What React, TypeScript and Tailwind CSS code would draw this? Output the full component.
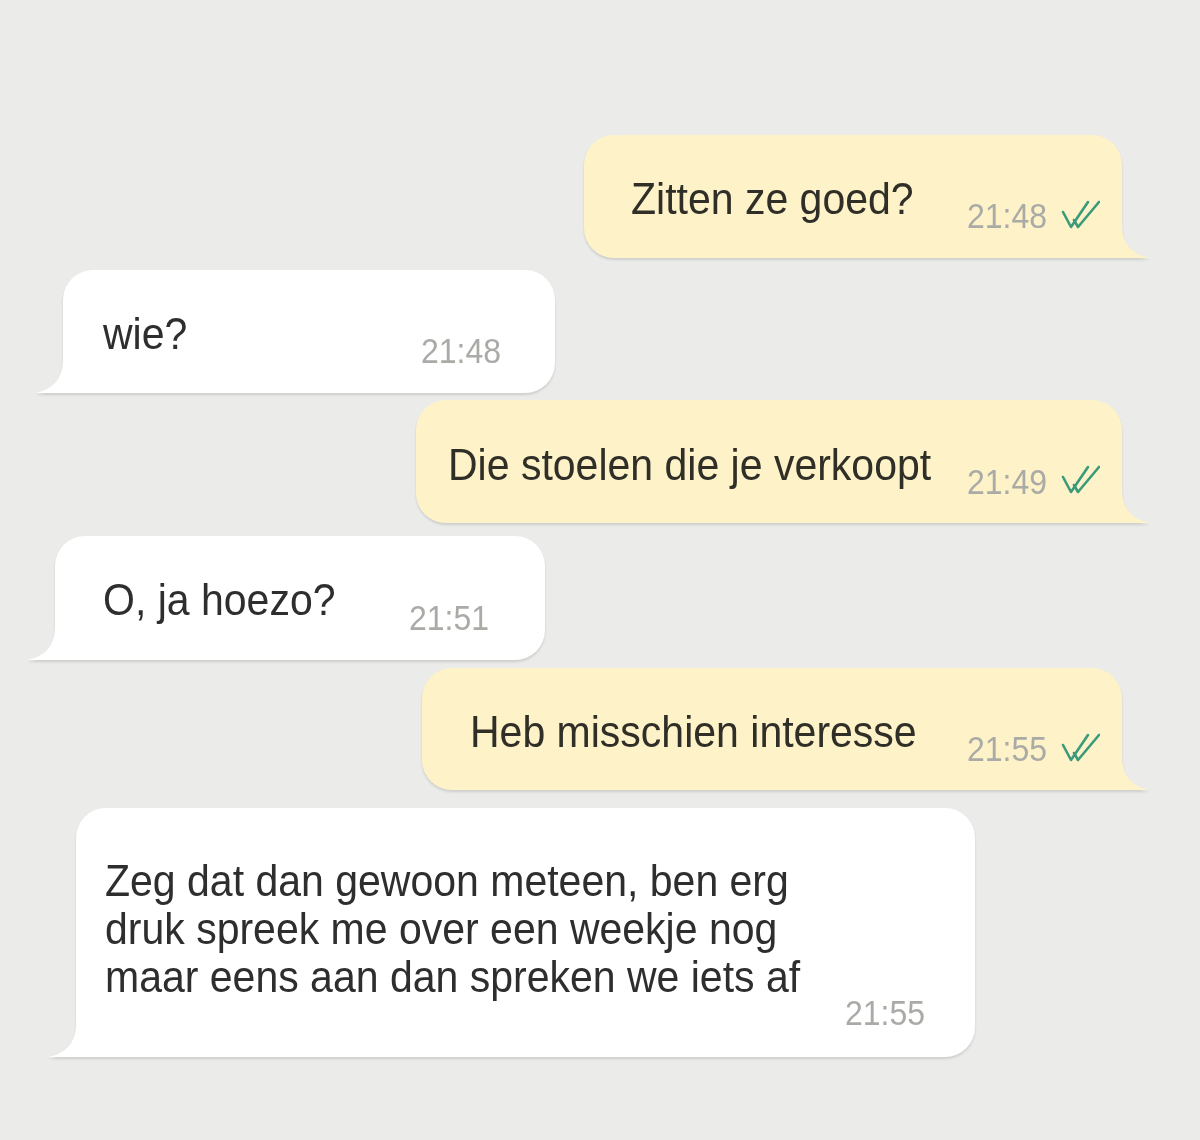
import React from "react";

const FONT = { fontFamily: '"Liberation Sans", Arial, sans-serif' };

function Checks() {
  return (
    <svg width="40" height="30" viewBox="0 0 40 30" fill="none" className="shrink-0 mt-[65px]">
      <path d="M3 12 L11 27 L28 2" stroke="#3b9a7a" strokeWidth="2.6" strokeLinecap="round" strokeLinejoin="round" />
      <path d="M14 20 L18 27 L39 2" stroke="#3b9a7a" strokeWidth="2.6" strokeLinecap="round" strokeLinejoin="round" />
    </svg>
  );
}

function Time({ t }: { t: string }) {
  return (
    <div className="shrink-0 text-[32px] leading-[36px] text-[#aaaaa6] scale-y-[1.1]">{t}</div>
  );
}

function SentTail() {
  return (
    <svg className="absolute bottom-0 left-[calc(100%-1px)]" width="30" height="34" viewBox="0 0 30 34">
      <path d="M0 0 L1 0 C1 18 9 30 29 34 L0 34 Z" fill="#fdf2c8" />
    </svg>
  );
}

function RecvTail() {
  return (
    <svg className="absolute bottom-0 right-[calc(100%-1px)]" width="30" height="34" viewBox="0 0 30 34">
      <path d="M30 0 L29 0 C29 18 21 30 1 34 L30 34 Z" fill="#ffffff" />
    </svg>
  );
}

export default function App() {
  return (
    <div className="w-[1200px] h-[1140px] bg-[#ebebe9] pt-[135px] overflow-hidden" style={FONT}>
      {/* B1 sent */}
      <div className="flex justify-end pr-[78px]">
        <div className="relative drop-shadow-[0_2px_1px_rgba(0,0,0,0.12)]">
          <div className="w-[538px] h-[123px] bg-[#fdf2c8] rounded-[30px] rounded-br-none flex items-start pl-[47px] pr-[22px]">
            <div className="pt-[38px] text-[41px] leading-[48px] text-[#2f2e27] scale-y-[1.1]">Zitten ze goed?</div>
            <div className="flex-1" />
            <div className="mt-[63px]"><Time t="21:48" /></div>
            <div className="w-[13px]" />
            <Checks />
          </div>
          <SentTail />
        </div>
      </div>

      {/* B2 received */}
      <div className="flex mt-[12px] pl-[63px]">
        <div className="relative drop-shadow-[0_2px_1px_rgba(0,0,0,0.12)]">
          <div className="w-[492px] h-[123px] bg-white rounded-[30px] rounded-bl-none flex items-start pl-[40px] pr-[54px]">
            <div className="pt-[38px] text-[41px] leading-[48px] text-[#2e2e2e] scale-y-[1.1]">wie?</div>
            <div className="flex-1" />
            <div className="mt-[63px]"><Time t="21:48" /></div>
          </div>
          <RecvTail />
        </div>
      </div>

      {/* B3 sent */}
      <div className="flex justify-end pr-[78px] mt-[7px]">
        <div className="relative drop-shadow-[0_2px_1px_rgba(0,0,0,0.12)]">
          <div className="w-[706px] h-[123px] bg-[#fdf2c8] rounded-[30px] rounded-br-none flex items-start pl-[32px] pr-[22px]">
            <div className="pt-[39px] text-[41px] leading-[48px] text-[#2f2e27] scale-y-[1.1] whitespace-nowrap">Die stoelen die je verkoopt</div>
            <div className="flex-1" />
            <div className="mt-[64px]"><Time t="21:49" /></div>
            <div className="w-[13px]" />
            <Checks />
          </div>
          <SentTail />
        </div>
      </div>

      {/* B4 received */}
      <div className="flex mt-[13px] pl-[55px]">
        <div className="relative drop-shadow-[0_2px_1px_rgba(0,0,0,0.12)]">
          <div className="w-[490px] h-[124px] bg-white rounded-[30px] rounded-bl-none flex items-start pl-[48px] pr-[56px]">
            <div className="pt-[38px] text-[41px] leading-[48px] text-[#2e2e2e] scale-y-[1.1] whitespace-nowrap">O, ja hoezo?</div>
            <div className="flex-1" />
            <div className="mt-[64px]"><Time t="21:51" /></div>
          </div>
          <RecvTail />
        </div>
      </div>

      {/* B5 sent */}
      <div className="flex justify-end pr-[78px] mt-[8px]">
        <div className="relative drop-shadow-[0_2px_1px_rgba(0,0,0,0.12)]">
          <div className="w-[700px] h-[122px] bg-[#fdf2c8] rounded-[30px] rounded-br-none flex items-start pl-[48px] pr-[22px]">
            <div className="pt-[38px] text-[41px] leading-[48px] text-[#2f2e27] scale-y-[1.1] whitespace-nowrap">Heb misschien interesse</div>
            <div className="flex-1" />
            <div className="mt-[63px]"><Time t="21:55" /></div>
            <div className="w-[13px]" />
            <Checks />
          </div>
          <SentTail />
        </div>
      </div>

      {/* B6 received */}
      <div className="flex mt-[18px] pl-[76px]">
        <div className="relative drop-shadow-[0_2px_1px_rgba(0,0,0,0.12)]">
          <div className="w-[899px] h-[249px] bg-white rounded-[30px] rounded-bl-none flex flex-col pl-[29px] pr-[50px] pt-[49px]">
            <div className="text-[41px] leading-[48px] text-[#2e2e2e] whitespace-nowrap">
              <div className="scale-y-[1.1] origin-center">Zeg dat dan gewoon meteen, ben erg</div>
              <div className="scale-y-[1.1] origin-center">druk spreek me over een weekje nog</div>
              <div className="scale-y-[1.1] origin-center">maar eens aan dan spreken we iets af</div>
            </div>
            <div className="flex justify-end -mt-[6px]">
              <Time t="21:55" />
            </div>
          </div>
          <RecvTail />
        </div>
      </div>
    </div>
  );
}
